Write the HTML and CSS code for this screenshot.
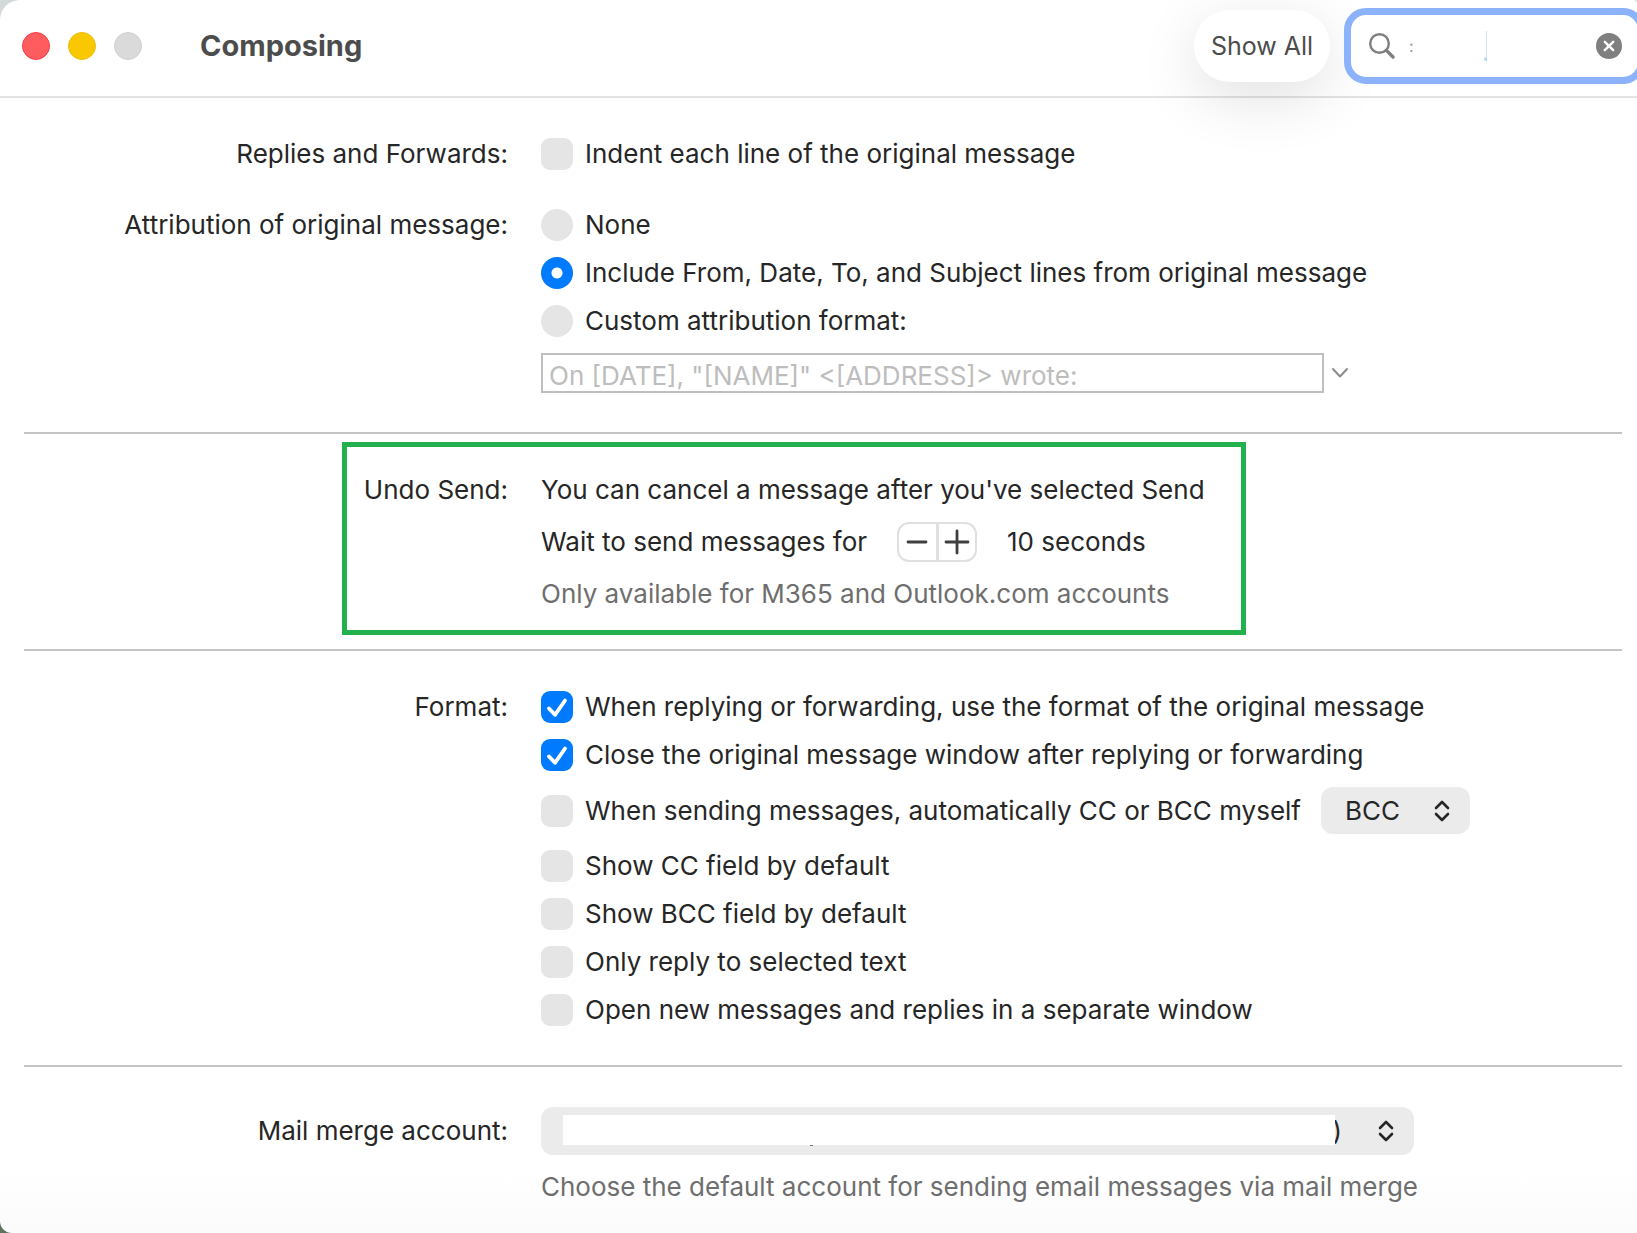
FILE: index.html
```html
<!DOCTYPE html>
<html lang="en">
<head>
    <meta charset="UTF-8">
    <meta name="viewport" content="width=device-width, initial-scale=1.0">
    <title>Composing</title>
    <link rel="stylesheet" href="styles.css">
</head>
<body>
    <div class="window">
        <header class="titlebar">
            <div class="traffic-lights">
                <button class="light light-close" type="button" aria-label="Close"></button>
                <button class="light light-minimize" type="button" aria-label="Minimize"></button>
                <button class="light light-zoom" type="button" aria-label="Zoom" disabled></button>
            </div>
            <h1 class="title">Composing</h1>
            <button class="show-all" type="button">Show All</button>
            <div class="search">
                <svg class="search-icon" viewBox="0 0 26 26" aria-hidden="true">
                    <circle cx="10.5" cy="10.5" r="9.3" fill="none" stroke="#7f7f7f" stroke-width="2.4"/>
                    <path d="M17.4 17.4L24 24" stroke="#7f7f7f" stroke-width="3.4" stroke-linecap="round"/>
                </svg>
                <input class="search-input" type="text" aria-label="Search" value=":">
                <span class="caret"></span>
                <button class="clear" type="button" aria-label="Clear">
                    <svg viewBox="0 0 26 26" aria-hidden="true">
                        <circle cx="13" cy="13" r="13" fill="#7f7f7f"/>
                        <path d="M8.8 8.8l8.4 8.4M17.2 8.8l-8.4 8.4" stroke="#fff" stroke-width="2.4" stroke-linecap="round"/>
                    </svg>
                </button>
            </div>
        </header>

        <main class="content">
            <!-- Replies and attribution -->
            <section class="section">
                <div class="row">
                    <div class="row-label">Replies and Forwards:</div>
                    <div class="row-body">
                        <label class="option">
                            <input class="box" type="checkbox">
                            <span>Indent each line of the original message</span>
                        </label>
                    </div>
                </div>
                <div class="row">
                    <div class="row-label">Attribution of original message:</div>
                    <div class="row-body">
                        <label class="option">
                            <input class="box radio" type="radio" name="attribution">
                            <span>None</span>
                        </label>
                        <label class="option">
                            <input class="box radio" type="radio" name="attribution" checked>
                            <span>Include From, Date, To, and Subject lines from original message</span>
                        </label>
                        <label class="option">
                            <input class="box radio" type="radio" name="attribution">
                            <span>Custom attribution format:</span>
                        </label>
                        <div class="custom-format">
                            <input class="format-input" type="text" aria-label="Custom attribution format" value='On [DATE], "[NAME]" &lt;[ADDRESS]&gt; wrote:' disabled>
                            <button class="format-menu" type="button" aria-label="Attribution formats">
                                <svg viewBox="0 0 18 12" aria-hidden="true">
                                    <path d="M2 2l7 7.5l7-7.5" fill="none" stroke="#8c8c8c" stroke-width="2" stroke-linecap="round" stroke-linejoin="round"/>
                                </svg>
                            </button>
                        </div>
                    </div>
                </div>
            </section>

            <!-- Undo send -->
            <section class="section">
                <div class="row">
                    <div class="row-label">Undo Send:</div>
                    <div class="row-body">
                        <p>You can cancel a message after you've selected Send</p>
                        <div class="delay">
                            <span>Wait to send messages for</span>
                            <div class="stepper">
                                <button class="step" type="button" aria-label="Decrease">
                                    <svg viewBox="0 0 26 26" aria-hidden="true">
                                        <path d="M4 13h18" stroke="#3f3f3f" stroke-width="2.8" stroke-linecap="round"/>
                                    </svg>
                                </button>
                                <button class="step" type="button" aria-label="Increase">
                                    <svg viewBox="0 0 26 26" aria-hidden="true">
                                        <path d="M2 13h22M13 2v22" stroke="#3f3f3f" stroke-width="2.8" stroke-linecap="round"/>
                                    </svg>
                                </button>
                            </div>
                            <span>10 seconds</span>
                        </div>
                        <p class="hint">Only available for M365 and Outlook.com accounts</p>
                    </div>
                </div>
                <div class="highlight"></div>
            </section>

            <!-- Format -->
            <section class="section">
                <div class="row">
                    <div class="row-label">Format:</div>
                    <div class="row-body">
                        <label class="option">
                            <span class="tick">
                                <input class="box" type="checkbox" checked>
                                <svg class="tick-mark" viewBox="0 0 32 32" aria-hidden="true">
                                    <path d="M8 17.5l6 6.3L24 9.500" fill="none" stroke="#fff" stroke-width="3.8" stroke-linecap="round" stroke-linejoin="round"/>
                                </svg>
                            </span>
                            <span>When replying or forwarding, use the format of the original message</span>
                        </label>
                        <label class="option">
                            <span class="tick">
                                <input class="box" type="checkbox" checked>
                                <svg class="tick-mark" viewBox="0 0 32 32" aria-hidden="true">
                                    <path d="M8 17.5l6 6.3L24 9.500" fill="none" stroke="#fff" stroke-width="3.8" stroke-linecap="round" stroke-linejoin="round"/>
                                </svg>
                            </span>
                            <span>Close the original message window after replying or forwarding</span>
                        </label>
                        <div class="copy-self">
                            <label class="option">
                                <input class="box" type="checkbox">
                                <span>When sending messages, automatically CC or BCC myself</span>
                            </label>
                            <div class="popup">
                                <select class="popup-select" aria-label="Copy type">
                                    <option>CC</option>
                                    <option selected>BCC</option>
                                </select>
                                <svg class="popup-arrows" viewBox="0 0 16 22" aria-hidden="true">
                                    <path d="M2 8l6-6l6 6M2 14l6 6l6-6" fill="none" stroke="#262626" stroke-width="2.6" stroke-linecap="round" stroke-linejoin="round"/>
                                </svg>
                            </div>
                        </div>
                        <label class="option">
                            <input class="box" type="checkbox">
                            <span>Show CC field by default</span>
                        </label>
                        <label class="option">
                            <input class="box" type="checkbox">
                            <span>Show BCC field by default</span>
                        </label>
                        <label class="option">
                            <input class="box" type="checkbox">
                            <span>Only reply to selected text</span>
                        </label>
                        <label class="option">
                            <input class="box" type="checkbox">
                            <span>Open new messages and replies in a separate window</span>
                        </label>
                    </div>
                </div>
            </section>

            <!-- Mail merge -->
            <section class="section">
                <div class="row">
                    <label class="row-label row-label-tall" for="merge-account">Mail merge account:</label>
                    <div class="row-body">
                        <div class="popup popup-wide">
                            <select class="popup-select" id="merge-account">
                                <option>)</option>
                            </select>
                            <span class="account-mask"></span>
                            <svg class="popup-arrows" viewBox="0 0 16 22" aria-hidden="true">
                                <path d="M2 8l6-6l6 6M2 14l6 6l6-6" fill="none" stroke="#262626" stroke-width="2.6" stroke-linecap="round" stroke-linejoin="round"/>
                            </svg>
                        </div>
                        <p class="hint">Choose the default account for sending email messages via mail merge</p>
                    </div>
                </div>
            </section>
        </main>
    </div>
</body>
</html>
```

FILE: styles.css
```css
* {
    margin: 0;
    padding: 0;
    box-sizing: border-box;
}

body {
    background: linear-gradient(#d3d8d8 50%, #5a735f 50%);
    color: #262626;
    font-family: Inter, "Liberation Sans", sans-serif;
    font-size: 26px;
    line-height: 32px;
}

button, input, select {
    font: inherit;
    color: inherit;
    border: none;
    background: none;
    appearance: none;
    outline: none;
}

svg {
    display: block;
}

.window {
    min-height: 100vh;
    overflow: hidden;
    background: linear-gradient(#fff 95%, #fbfbfb);
    border-radius: 20px 4px 0 12px;
}

/* Title bar */
.titlebar {
    display: flex;
    align-items: center;
    height: 98px;
    padding: 0 0 4px 22px;
    border-bottom: 2px solid #e3e3e3;
}

.traffic-lights {
    display: flex;
    gap: 18px;
    margin-right: 58px;
}

.light {
    width: 28px;
    height: 28px;
    border: 1px solid transparent;
    border-radius: 50%;
}

.light-close {
    background-color: #ff5c60;
    border-color: #fb3b44;
}

.light-minimize {
    background-color: #fac800;
    border-color: #efbd0c;
}

.light-zoom {
    background-color: #dadada;
    border-color: #d0d0d0;
}

.title {
    margin-right: auto;
    color: #4c4c4c;
    font-size: 29px;
    font-weight: 700;
}

.show-all {
    width: 136px;
    height: 72px;
    margin-right: 14px;
    border-radius: 36px;
    background-color: #fff;
    color: #4c4c4c;
    font-size: 25px;
    box-shadow: 0 16px 60px rgba(0, 0, 0, 0.12);
}

/* The field runs past the right edge of the window */
.search {
    position: relative;
    display: flex;
    align-items: center;
    width: 301px;
    height: 76px;
    margin-right: -8px;
    padding: 0 16px 0 18px;
    border: 7px solid #8cb2fc;
    border-radius: 22px;
    background-color: #fff;
}

.search-icon {
    flex: none;
    width: 26px;
    height: 26px;
    margin-right: 14px;
}

.search-input {
    flex: 1;
    min-width: 0;
    color: #999;
    font-size: 16px;
}

.caret {
    position: absolute;
    left: 135px;
    top: 16px;
    width: 1px;
    height: 30px;
    background-color: #cfe2fb;
}

.caret::after {
    content: "";
    position: absolute;
    right: 0;
    bottom: 0;
    width: 3px;
    height: 4px;
    border-radius: 2px;
    background-color: #bfd9fd;
}

.clear {
    width: 26px;
    height: 26px;
}

/* Settings rows */
.content {
    padding: 0 15px 0 24px;
}

.section {
    position: relative;
    padding: 40px 0 39px;
}

.section + .section {
    border-top: 2px solid #c4c4c4;
}

.section:last-child {
    padding-bottom: 20px;
}

.row {
    display: grid;
    grid-template-columns: 484px 1fr;
    column-gap: 33px;
}

.row + .row {
    margin-top: 39px;
}

.row-label {
    text-align: right;
}

.row-label-tall {
    line-height: 48px;
}

.row-body {
    display: flex;
    flex-direction: column;
    align-items: flex-start;
    gap: 16px;
}

.option {
    display: flex;
    align-items: center;
    gap: 12px;
}

.box {
    flex: none;
    display: block;
    width: 32px;
    height: 32px;
    border-radius: 9px;
    background-color: #e5e5e5;
}

.box:checked {
    background-color: #007aff;
}

.radio {
    border-radius: 50%;
}

.radio:checked {
    background: radial-gradient(circle, #fff 5px, #007aff 6px);
}

.tick {
    display: grid;
}

.tick > * {
    grid-area: 1 / 1;
}

.tick-mark {
    width: 32px;
    height: 32px;
    pointer-events: none;
}

.box:not(:checked) + .tick-mark {
    visibility: hidden;
}

.custom-format {
    display: flex;
    align-items: center;
    gap: 7px;
}

.format-input {
    width: 783px;
    height: 40px;
    padding: 4px 6px 0;
    border: 2px solid #bfbfbf;
    color: #bdbdbd;
}

.format-menu {
    width: 18px;
    height: 12px;
}

.hint {
    color: #6e6e6e;
}

/* Undo send */
.highlight {
    position: absolute;
    top: 8px;
    bottom: 14px;
    left: 318px;
    width: 904px;
    border: 5px solid #23b14d;
    pointer-events: none;
}

.delay {
    display: flex;
    align-items: center;
    gap: 30px;
}

.stepper {
    display: flex;
    width: 80px;
    height: 40px;
    border: 2px solid #e0e0e0;
    border-radius: 12px;
}

.step {
    flex: 1;
    display: flex;
    align-items: center;
    justify-content: center;
}

.step + .step {
    border-left: 3px solid #e0e0e0;
}

.step svg {
    width: 26px;
    height: 26px;
}

/* Pop-up menus */
.copy-self {
    display: flex;
    align-items: center;
    gap: 20px;
}

.popup {
    position: relative;
    display: flex;
    align-items: center;
    width: 149px;
    height: 47px;
}

.popup-select {
    width: 100%;
    height: 100%;
    padding: 0 24px;
    border-radius: 12px;
    background-color: #ebebeb;
}

.popup-arrows {
    position: absolute;
    right: 20px;
    width: 16px;
    height: 22px;
    pointer-events: none;
}

.popup-wide {
    width: 873px;
    height: 48px;
}

.popup-wide .popup-select {
    padding-right: 72px;
    text-align-last: right;
}

.account-mask {
    position: absolute;
    top: 8px;
    bottom: 10px;
    left: 22px;
    right: 79px;
    background-color: #fff;
    pointer-events: none;
}

.account-mask::after {
    content: "";
    position: absolute;
    top: 100%;
    left: 247px;
    width: 3px;
    height: 1px;
    background-color: #777;
}
```
